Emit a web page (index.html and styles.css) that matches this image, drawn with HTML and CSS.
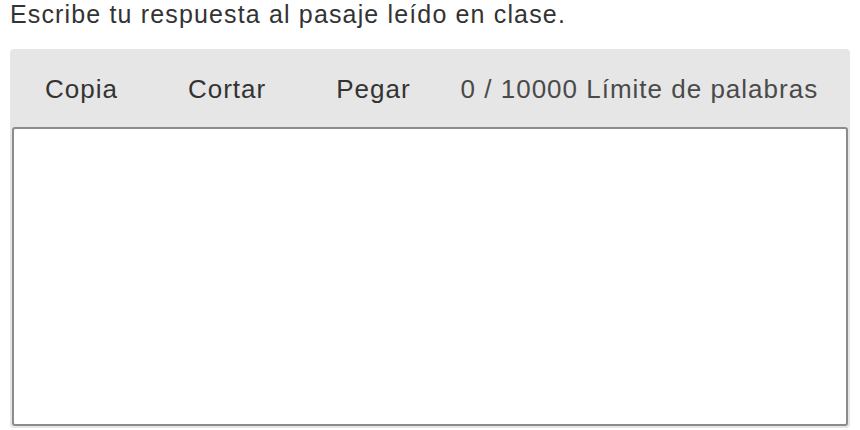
FILE: index.html
```html
<!DOCTYPE html>
<html lang="es">
<head>
<meta charset="utf-8">
<link rel="stylesheet" href="styles.css">
</head>
<body>
<div class="page">
  <p class="prompt">Escribe tu respuesta al pasaje leído en clase.</p>
  <div class="editor">
    <div class="toolbar">
      <span class="btn">Copia</span>
      <span class="btn">Cortar</span>
      <span class="btn">Pegar</span>
      <span class="count">0 / 10000 Límite de palabras</span>
    </div>
    <textarea class="area"></textarea>
  </div>
</div>
</body>
</html>
```
FILE: styles.css
```css
html, body {
  margin: 0;
  padding: 0;
  background: #fff;
}
.page {
  padding: 0 10px;
  font-family: "Liberation Sans", Arial, sans-serif;
  color: #333;
}
.prompt {
  margin: 0;
  font-size: 25px;
  line-height: 28px;
  letter-spacing: 1.15px;
  height: 49px;
}
.editor {
  background: #e6e6e6;
  border-radius: 4px;
  padding: 0 2px 2px 2px;
  height: 379px;
  display: flex;
  flex-direction: column;
  box-sizing: border-box;
}
.toolbar {
  display: flex;
  align-items: center;
  height: 78px;
  box-sizing: border-box;
  padding-left: 33px;
  padding-top: 3px;
  font-size: 26px;
  letter-spacing: 1px;
  color: #333;
}
.btn {
  margin-right: 70px;
}
.btn:nth-child(3) {
  margin-right: 50px;
}
.count {
  color: #4a4a4a;
}
.area {
  flex: 1;
  margin: 0;
  border: 2px solid #8c8c8c;
  border-radius: 3px;
  background: #fff;
  resize: none;
  display: block;
  box-sizing: border-box;
  width: 100%;
}
```
